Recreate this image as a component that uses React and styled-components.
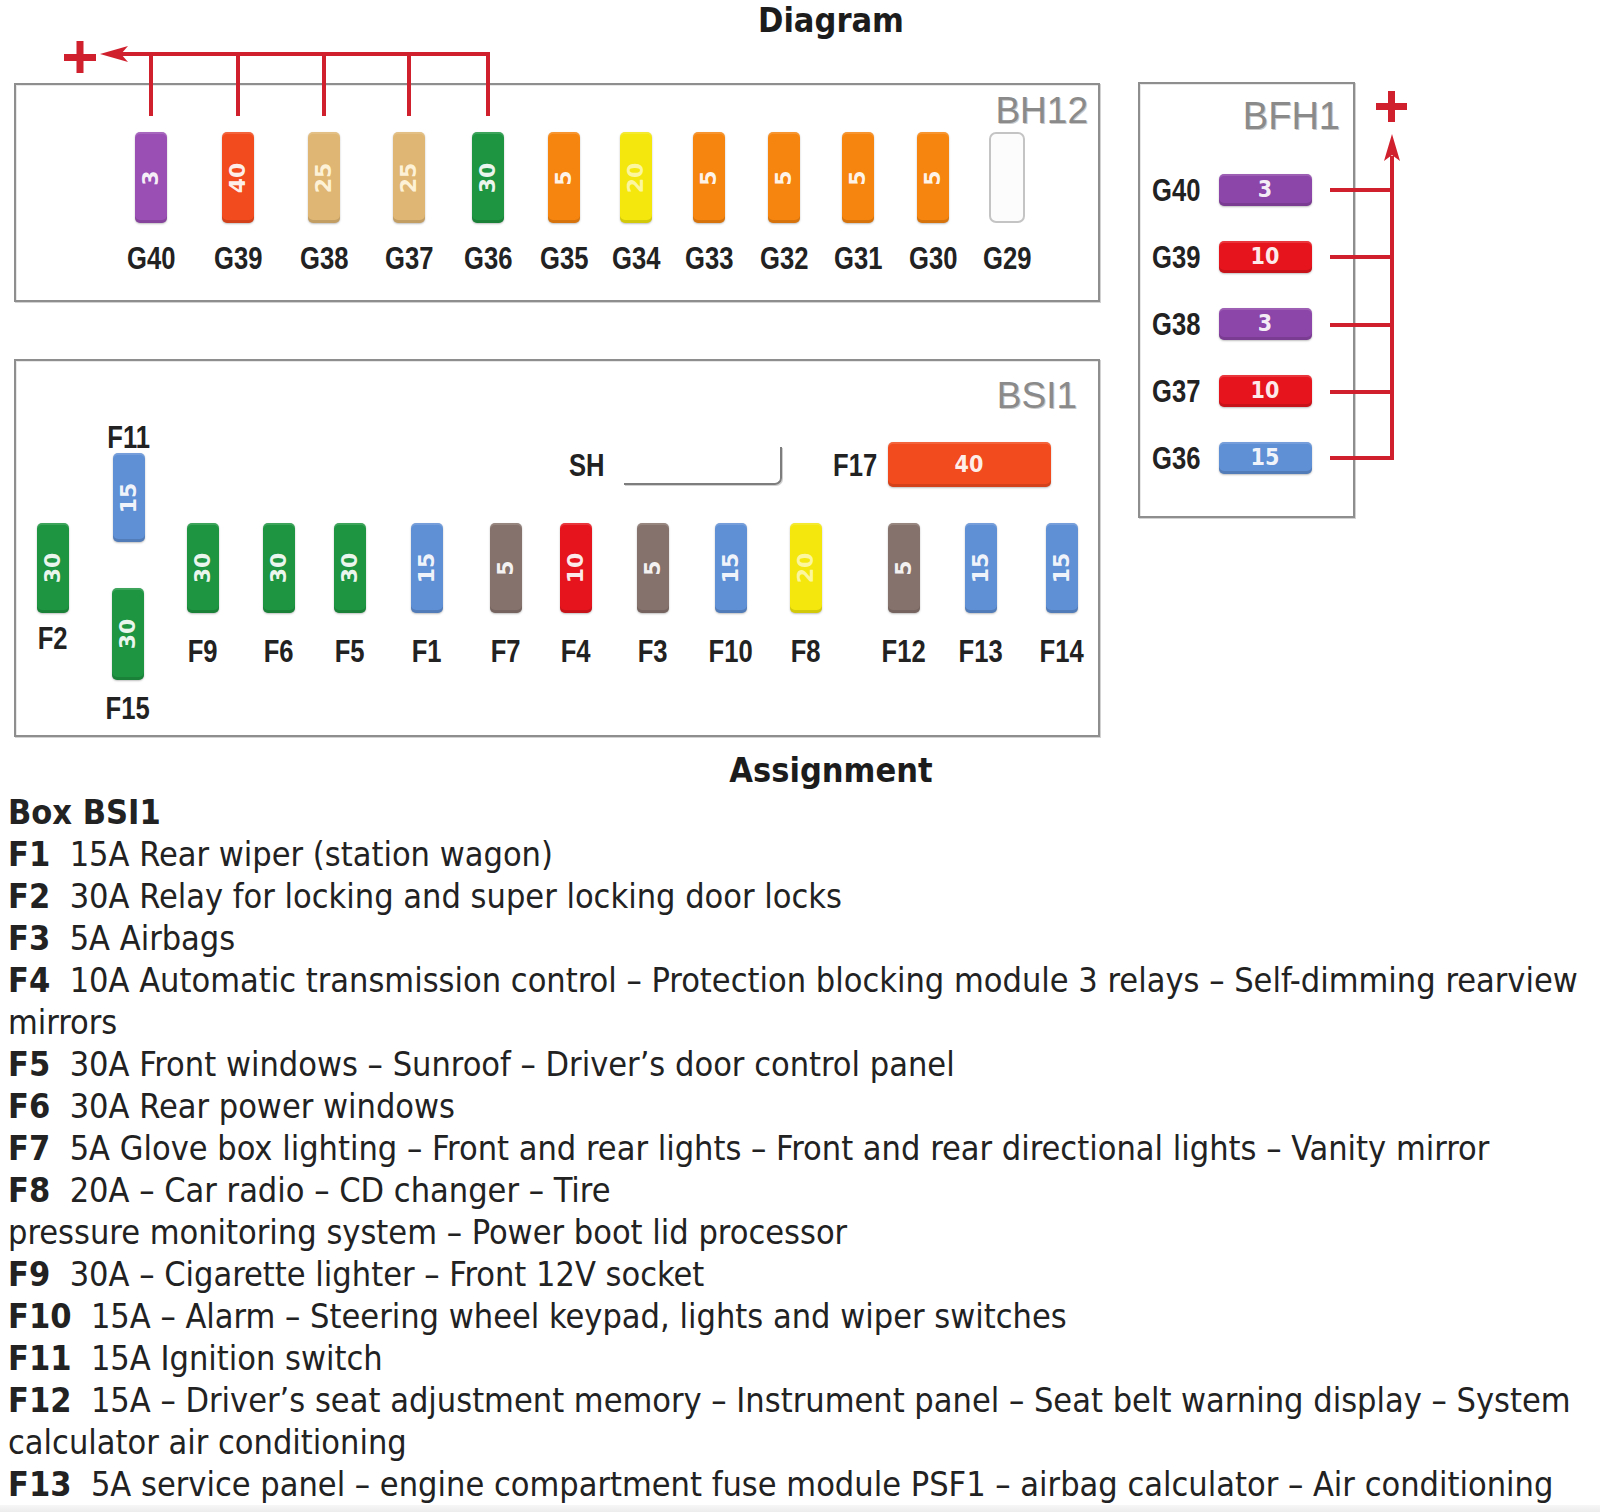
import React from "react";
import styled, { createGlobalStyle, css } from "styled-components";

const GlobalStyle = createGlobalStyle`
  html, body {
    margin: 0;
    padding: 0;
    background: #fff;
  }
  body {
    font-family: "DejaVu Sans Condensed", "DejaVu Sans", sans-serif;
    color: #222;
  }
`;

const WIRE = "#d0202e";

const FUSE = {
  purple: "#9a4fb4",
  violet: "#8c45a8",
  flame: "#f24b1d",
  tan: "#dfb673",
  green: "#1d9541",
  orange: "#f6850f",
  yellow: "#f3e70d",
  red: "#e6151d",
  blue: "#5f8fd4",
  taupe: "#86726c",
};

const INK = {
  tan: "rgba(255,246,222,0.95)",
  yellow: "rgba(255,252,200,0.8)",
};

const bh12 = [
  { id: "G40", x: 135, color: "purple", amp: "3" },
  { id: "G39", x: 222, color: "flame", amp: "40" },
  { id: "G38", x: 308, color: "tan", amp: "25" },
  { id: "G37", x: 393, color: "tan", amp: "25" },
  { id: "G36", x: 472, color: "green", amp: "30" },
  { id: "G35", x: 548, color: "orange", amp: "5" },
  { id: "G34", x: 620, color: "yellow", amp: "20" },
  { id: "G33", x: 693, color: "orange", amp: "5" },
  { id: "G32", x: 768, color: "orange", amp: "5" },
  { id: "G31", x: 842, color: "orange", amp: "5" },
  { id: "G30", x: 917, color: "orange", amp: "5" },
  { id: "G29", x: 991, color: null, amp: null },
];

const bsi1 = [
  { id: "F2", x: 37, color: "green", amp: "30", gap: 9 },
  { id: "F9", x: 187, color: "green", amp: "30" },
  { id: "F6", x: 263, color: "green", amp: "30" },
  { id: "F5", x: 334, color: "green", amp: "30" },
  { id: "F1", x: 411, color: "blue", amp: "15" },
  { id: "F7", x: 490, color: "taupe", amp: "5" },
  { id: "F4", x: 560, color: "red", amp: "10" },
  { id: "F3", x: 637, color: "taupe", amp: "5" },
  { id: "F10", x: 715, color: "blue", amp: "15" },
  { id: "F8", x: 790, color: "yellow", amp: "20" },
  { id: "F12", x: 888, color: "taupe", amp: "5" },
  { id: "F13", x: 965, color: "blue", amp: "15" },
  { id: "F14", x: 1046, color: "blue", amp: "15" },
];

const bfh1 = [
  { id: "G40", color: "violet", amp: "3" },
  { id: "G39", color: "red", amp: "10" },
  { id: "G38", color: "violet", amp: "3" },
  { id: "G37", color: "red", amp: "10" },
  { id: "G36", color: "blue", amp: "15" },
];

// second string = text that goes on the next line in the source page
const entries = [
  ["F1", "15A Rear wiper (station wagon)"],
  ["F2", "30A Relay for locking and super locking door locks"],
  ["F3", "5A Airbags"],
  [
    "F4",
    "10A Automatic transmission control – Protection blocking module 3 relays – Self-dimming rearview",
    "mirrors",
  ],
  ["F5", "30A Front windows – Sunroof – Driver’s door control panel"],
  ["F6", "30A Rear power windows"],
  [
    "F7",
    "5A Glove box lighting – Front and rear lights – Front and rear directional lights – Vanity mirror",
  ],
  [
    "F8",
    "20A – Car radio – CD changer – Tire",
    "pressure monitoring system – Power boot lid processor",
  ],
  ["F9", "30A – Cigarette lighter – Front 12V socket"],
  ["F10", "15A – Alarm – Steering wheel keypad, lights and wiper switches"],
  ["F11", "15A Ignition switch"],
  [
    "F12",
    "15A – Driver’s seat adjustment memory – Instrument panel – Seat belt warning display – System",
    "calculator air conditioning",
  ],
  [
    "F13",
    "5A service panel – engine compartment fuse module PSF1 – airbag calculator – Air conditioning",
  ],
];

function Fuse({ color, amp, w = 32, h = 91, flat }) {
  if (!color) return <EmptyFuse $w={w} $h={h} />;
  return (
    <FuseBody $bg={FUSE[color]} $w={w} $h={h}>
      <FuseAmp $upright={flat} $ink={INK[color]}>
        {amp}
      </FuseAmp>
    </FuseBody>
  );
}

function Wires() {
  const drops = [151, 238, 324, 409, 488];
  const rows = [190, 257, 325, 392, 458];
  return (
    <WireLayer viewBox="0 40 1600 697" width="1600" height="697">
      <g stroke={WIRE} strokeWidth="4" fill="none">
        <path d="M120 54 H490" />
        {drops.map((x) => (
          <path key={x} d={`M${x} 52 V116`} />
        ))}
        <path d="M1392 156 V460" />
        {rows.map((y) => (
          <path key={y} d={`M1330 ${y} H1394`} />
        ))}
      </g>
      <g fill={WIRE}>
        <polygon points="100,54 128,46 121,54 128,62" />
        <polygon points="1392,134 1384,161 1392,155 1400,161" />
        <rect x="64" y="54" width="32" height="7" />
        <rect x="76.5" y="41" width="7" height="32" />
        <rect x="1376" y="103" width="31" height="7" />
        <rect x="1388" y="91" width="7" height="31" />
      </g>
    </WireLayer>
  );
}

export default function App() {
  return (
    <Page>
      <GlobalStyle />
      <Heading>Diagram</Heading>
      <Canvas>
        <LeftColumn>
          <FuseBox $w={1086} $h={219}>
            <BoxTitle $top={7} $right={10}>
              BH12
            </BoxTitle>
            {bh12.map((f) => (
              <Slot key={f.id} $x={f.x} $y={47}>
                <Fuse color={f.color} amp={f.amp} />
                <SlotLabel $gap={19}>{f.id}</SlotLabel>
              </Slot>
            ))}
          </FuseBox>
          <FuseBox $w={1086} $h={378}>
            <BoxTitle $top={16} $right={21}>
              BSI1
            </BoxTitle>
            <Slot $x={113} $y={60}>
              <SlotLabel $gap={0}>F11</SlotLabel>
              <Fuse color="blue" amp="15" h={89} />
            </Slot>
            <Slot $x={112} $y={227}>
              <Fuse color="green" amp="30" h={92} />
              <SlotLabel $gap={12}>F15</SlotLabel>
            </Slot>
            {bsi1.map((f) => (
              <Slot key={f.id} $x={f.x} $y={162}>
                <Fuse color={f.color} amp={f.amp} h={90} />
                <SlotLabel $gap={f.gap ?? 22}>{f.id}</SlotLabel>
              </Slot>
            ))}
            <RelayStrip>
              <StripLabel $w={55}>SH</StripLabel>
              <ShuntSocket />
              <StripLabel $w={55} $ml={51}>
                F17
              </StripLabel>
              <Fuse color="flame" amp="40" w={163} h={45} flat />
            </RelayStrip>
          </FuseBox>
        </LeftColumn>
        <SideBox>
          <SideTitle>BFH1</SideTitle>
          <SideRows>
            {bfh1.map((f) => (
              <SideRow key={f.id}>
                <SideLabel>{f.id}</SideLabel>
                <Fuse color={f.color} amp={f.amp} w={93} h={32} flat />
              </SideRow>
            ))}
          </SideRows>
        </SideBox>
        <Wires />
      </Canvas>
      <Heading as="h3" $assign>
        Assignment
      </Heading>
      <Listing>
        <BoxName>Box BSI1</BoxName>
        {entries.map(([code, text, more]) => (
          <React.Fragment key={code}>
            <Entry>
              <Code>{code}</Code>
              {"\u00a0 "}
              {text}
            </Entry>
            {more && <Entry>{more}</Entry>}
          </React.Fragment>
        ))}
      </Listing>
      <PageEdge />
    </Page>
  );
}

// Arial Narrow look: Liberation Sans Bold squeezed horizontally
const narrowBold = css`
  display: inline-block;
  font-family: "Liberation Sans", Arial, sans-serif;
  font-size: 32px;
  font-weight: 700;
  line-height: 32px;
  color: #222;
  white-space: nowrap;
  transform: scaleX(0.8);
`;

const Page = styled.div`
  width: 1600px;
  min-height: 1512px;
  display: flex;
  flex-direction: column;
`;

const Heading = styled.h2`
  margin: ${(p) => (p.$assign ? "12px 0 0" : "0")};
  padding: 0 8px 0 70px;
  text-align: center;
  font-family: "DejaVu Sans Condensed", "DejaVu Sans", sans-serif;
  font-size: 34px;
  font-weight: 700;
  line-height: ${(p) => (p.$assign ? "42px" : "40px")};
  color: #1c1c1c;
`;

const Canvas = styled.div`
  position: relative;
  box-sizing: border-box;
  height: 697px;
  display: flex;
  align-items: flex-start;
  padding: 43px 0 0 14px;
`;

const LeftColumn = styled.div`
  display: flex;
  flex-direction: column;
  gap: 57px;
`;

const FuseBox = styled.div`
  position: relative;
  box-sizing: border-box;
  width: ${(p) => p.$w}px;
  height: ${(p) => p.$h}px;
  border: 2px solid #8e8e8e;
  background: #fff;
  box-shadow: 1px 1px 0 #d2d2d2, inset 1px 1px 0 #e8e8e8;
`;

const BoxTitle = styled.span`
  position: absolute;
  top: ${(p) => p.$top}px;
  right: ${(p) => p.$right}px;
  font-family: "Liberation Sans", Arial, sans-serif;
  font-size: 37px;
  line-height: 38px;
  color: #8a8a8a;
  text-shadow: 1px 1px 0 #c9c9c9;
`;

const Slot = styled.div`
  position: absolute;
  left: ${(p) => p.$x - 35}px;
  top: ${(p) => p.$y}px;
  width: 70px;
  display: flex;
  flex-direction: column;
  align-items: center;
`;

const SlotLabel = styled.span`
  ${narrowBold}
  margin-top: ${(p) => p.$gap}px;
`;

const FuseBody = styled.div`
  box-sizing: border-box;
  flex-shrink: 0;
  width: ${(p) => p.$w}px;
  height: ${(p) => p.$h}px;
  border-radius: 5px;
  background: ${(p) => p.$bg};
  box-shadow: inset 0 -3px 0 rgba(0, 0, 0, 0.13), inset 0 2px 0 rgba(255, 255, 255, 0.14),
    0 1px 2px rgba(0, 0, 0, 0.25);
  display: flex;
  align-items: center;
  justify-content: center;
`;

const EmptyFuse = styled.div`
  box-sizing: border-box;
  width: ${(p) => p.$w + 4}px;
  height: ${(p) => p.$h}px;
  border: 2px solid #c4c4c4;
  border-radius: 7px;
  background: #fcfcfc;
`;

const FuseAmp = styled.span`
  display: inline-block;
  font-family: "DejaVu Sans", sans-serif;
  font-size: ${(p) => (p.$upright ? 23 : 22)}px;
  font-weight: 700;
  line-height: 1;
  white-space: nowrap;
  color: ${(p) => p.$ink || "rgba(255, 255, 255, 0.93)"};
  transform: ${(p) => (p.$upright ? "scaleX(0.9)" : "rotate(-90deg)")};
`;

const RelayStrip = styled.div`
  position: absolute;
  left: 553px;
  top: 81px;
  height: 45px;
  display: flex;
  align-items: center;
`;

const StripLabel = styled.span`
  ${narrowBold}
  width: ${(p) => p.$w}px;
  margin-left: ${(p) => p.$ml || 0}px;
  transform-origin: left center;
`;

const ShuntSocket = styled.div`
  box-sizing: border-box;
  align-self: flex-end;
  margin-bottom: 2px;
  width: 158px;
  height: 38px;
  border-right: 2px solid #7d7d7d;
  border-bottom: 2px solid #7d7d7d;
  border-bottom-right-radius: 7px;
  box-shadow: 1px 1px 0 #d0d0d0;
`;

const SideBox = styled.div`
  box-sizing: border-box;
  margin: -1px 0 0 38px;
  width: 217px;
  height: 436px;
  border: 2px solid #8e8e8e;
  background: #fff;
  box-shadow: 1px 1px 0 #d2d2d2, inset 1px 1px 0 #e8e8e8;
  display: flex;
  flex-direction: column;
`;

const SideTitle = styled.span`
  align-self: flex-end;
  margin: 13px 13px 0 0;
  font-family: "Liberation Sans", Arial, sans-serif;
  font-size: 38px;
  line-height: 38px;
  color: #8a8a8a;
  text-shadow: 1px 1px 0 #c9c9c9;
`;

const SideRows = styled.div`
  margin-top: 21px;
  display: flex;
  flex-direction: column;
`;

const SideRow = styled.div`
  height: 67px;
  display: flex;
  align-items: center;
  padding-left: 12px;
`;

const SideLabel = styled.span`
  ${narrowBold}
  width: 67px;
  transform-origin: left center;
`;

const WireLayer = styled.svg`
  position: absolute;
  left: 0;
  top: 0;
  pointer-events: none;
  overflow: visible;
`;

const Listing = styled.div`
  padding: 0 8px;
  font-family: "DejaVu Sans Condensed", "DejaVu Sans", sans-serif;
  font-size: 34px;
  line-height: 42px;
  color: #222;
`;

const BoxName = styled.div`
  font-weight: 700;
`;

const Entry = styled.div`
  white-space: nowrap;
`;

const Code = styled.b`
  font-weight: 700;
`;

const PageEdge = styled.div`
  margin-top: auto;
  height: 7px;
  background: linear-gradient(#f7f7f7, #ececec);
`;
